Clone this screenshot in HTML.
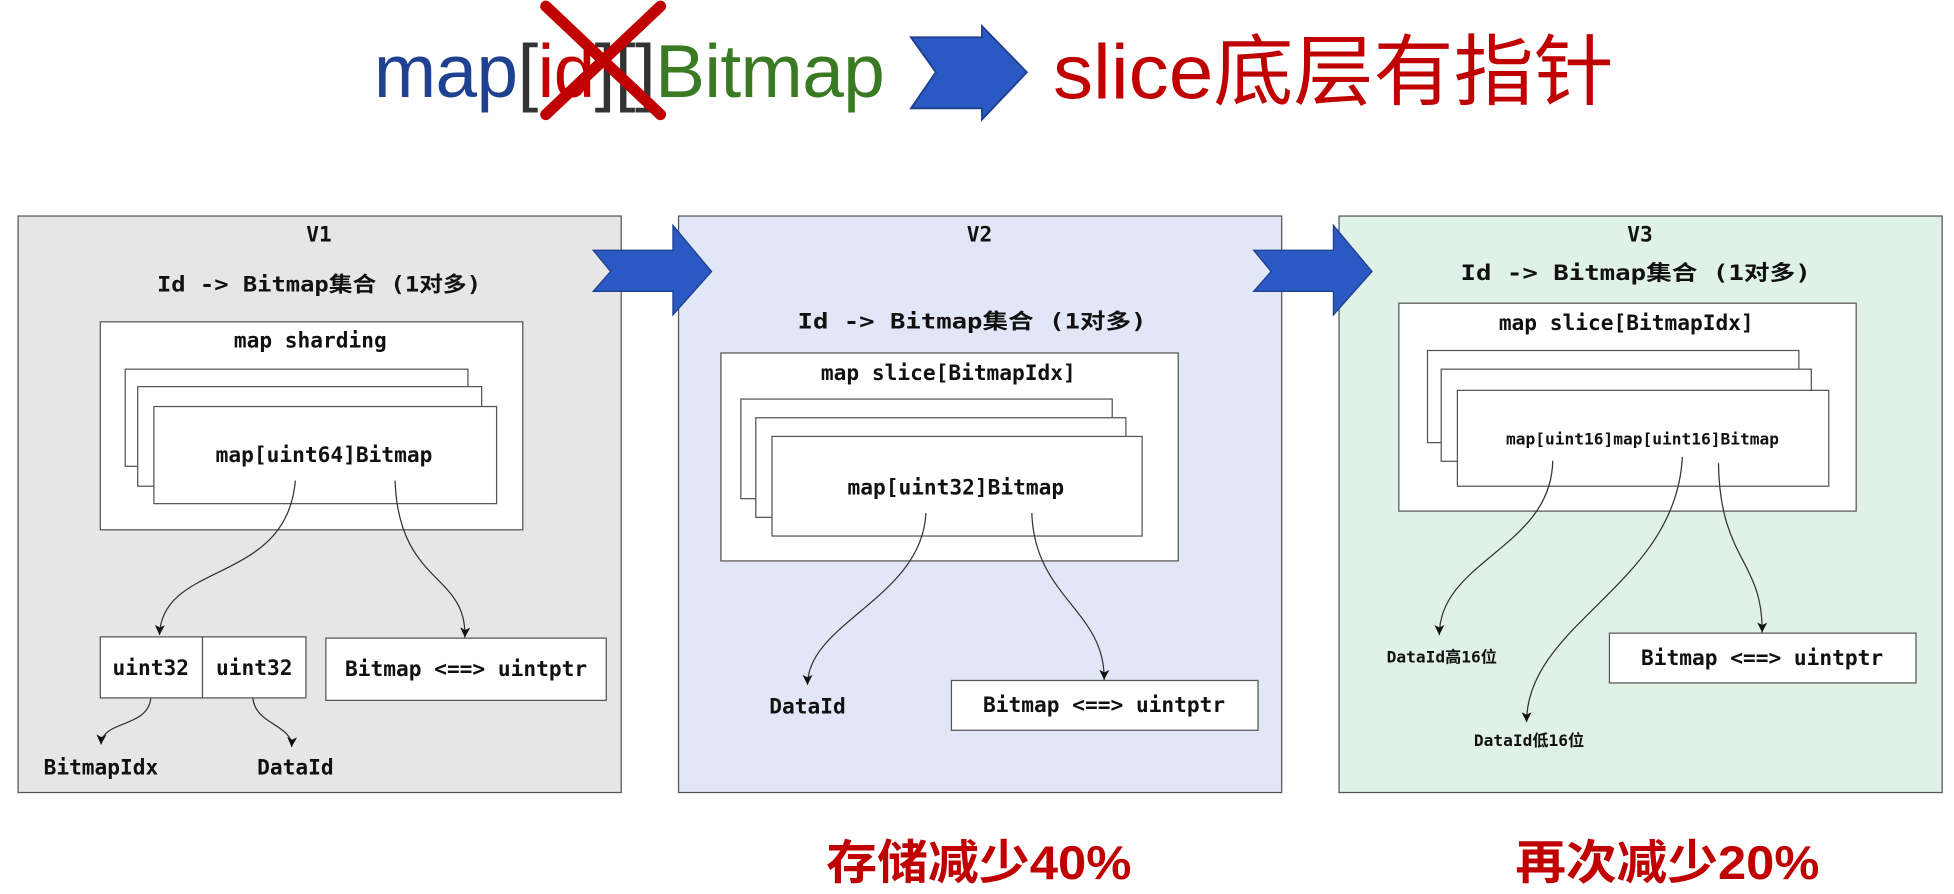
<!DOCTYPE html>
<html><head><meta charset="utf-8"><style>
html,body{margin:0;padding:0;background:#fff;width:1954px;height:894px;overflow:hidden}
svg{display:block}
.m{font-family:"DejaVu Sans Mono","Liberation Mono","Noto Sans CJK SC",monospace;font-weight:bold;fill:#111}
.cn{font-family:"Liberation Sans","Noto Sans CJK SC",sans-serif}
</style></head><body>
<svg width="1954" height="894" viewBox="0 0 1568 718" preserveAspectRatio="none" xmlns="http://www.w3.org/2000/svg">
<defs><marker id="a" markerWidth="10" markerHeight="10" refX="8" refY="5" orient="auto" markerUnits="userSpaceOnUse"><path d="M0,1 L8,5 L0,9 L2,5 Z" fill="#111"/></marker></defs>
<text x="300" y="78" class="cn" font-size="60" textLength="410" lengthAdjust="spacing"><tspan fill="#1f4191">map</tspan><tspan fill="#333">[</tspan><tspan fill="#c00000">id</tspan><tspan fill="#333">][]</tspan><tspan fill="#3a7a22">Bitmap</tspan></text>
<path d="M438,5 L530,92 M530,5 L438,92" stroke="#c00000" stroke-width="9" stroke-linecap="round"/>
<path d="M731,30 L788,30 L788,21 L824,58 L788,96 L788,87 L731,87 L751,58 Z" fill="#2b59c3" stroke="#1f3f8f" stroke-width="1.5"/>
<text x="845" y="79" class="cn" font-size="62" fill="#c00000" textLength="450" lengthAdjust="spacingAndGlyphs">slice底层有指针</text>
<rect x="14.5" y="173.5" width="484" height="463" fill="#e6e6e6" stroke="#555"/>
<rect x="544.5" y="173.5" width="484" height="463" fill="#e1e7f6" stroke="#555"/>
<rect x="1074.5" y="173.5" width="484" height="463" fill="#e0f2e8" stroke="#555"/>
<path d="M476,201 L540,201 L540,181 L571,218 L540,253 L540,234 L476,234 L490,218 Z" fill="#2b59c3" stroke="#1f3f8f"/>
<path d="M1006,201 L1070,201 L1070,181 L1101,218 L1070,253 L1070,234 L1006,234 L1020,218 Z" fill="#2b59c3" stroke="#1f3f8f"/>
<g class="m" font-size="17">
<text x="256" y="194" text-anchor="middle">V1</text>
<text x="126" y="234" textLength="260" lengthAdjust="spacingAndGlyphs">Id -&gt; Bitmap集合  (1对多)</text>
<text x="786" y="194" text-anchor="middle">V2</text>
<text x="640" y="264" textLength="280" lengthAdjust="spacingAndGlyphs">Id -&gt; Bitmap集合  (1对多)</text>
<text x="1316" y="194" text-anchor="middle">V3</text>
<text x="1172" y="225" textLength="281" lengthAdjust="spacingAndGlyphs">Id -&gt; Bitmap集合  (1对多)</text>
</g>
<g fill="#fff" stroke="#555" stroke-width="1">
<rect x="80.5" y="258.5" width="339" height="167"/>
<rect x="100.5" y="296.5" width="275" height="78"/>
<rect x="110.5" y="310.5" width="276" height="80"/>
<rect x="123.5" y="326.5" width="275" height="78"/>
<rect x="80.5" y="511.5" width="82" height="49"/><rect x="162.5" y="511.5" width="83" height="49"/>
<rect x="261.5" y="512.5" width="225" height="50"/>
<rect x="578.5" y="283.5" width="367" height="167"/>
<rect x="594.5" y="320.5" width="298" height="80"/>
<rect x="606.5" y="335.5" width="297" height="80"/>
<rect x="619.5" y="350.5" width="297" height="80"/>
<rect x="763.5" y="546.5" width="246" height="40"/>
<rect x="1122.5" y="243.5" width="367" height="167"/>
<rect x="1145.5" y="281.5" width="298" height="74"/>
<rect x="1156.5" y="296.5" width="297" height="74"/>
<rect x="1169.5" y="313.5" width="298" height="77"/>
<rect x="1291.5" y="508.5" width="246" height="40"/>
</g>
<g class="m" font-size="17" text-anchor="middle">
<text x="249" y="279">map sharding</text>
<text x="260" y="371">map[uint64]Bitmap</text>
<text x="121" y="542">uint32</text><text x="204" y="542">uint32</text>
<text x="374" y="543">Bitmap &lt;==&gt; uintptr</text>
<text x="81" y="622">BitmapIdx</text><text x="237" y="622">DataId</text>
<text x="761" y="305">map slice[BitmapIdx]</text>
<text x="767" y="397">map[uint32]Bitmap</text>
<text x="648" y="573">DataId</text>
<text x="886" y="572">Bitmap &lt;==&gt; uintptr</text>
<text x="1305" y="265">map slice[BitmapIdx]</text>
<text x="1414" y="534">Bitmap &lt;==&gt; uintptr</text>
<text x="1318" y="357" font-size="13">map[uint16]map[uint16]Bitmap</text>
<text x="1157" y="532" font-size="13">DataId高16位</text>
<text x="1227" y="599" font-size="13">DataId低16位</text>
</g>
<g fill="none" stroke="#333" stroke-width="1" marker-end="url(#a)">
<path d="M237,386 C230,470 130,450 128,510"/>
<path d="M317,386 C320,470 375,460 373,512"/>
<path d="M121,561 C118,585 82,578 81,598"/>
<path d="M203,561 C205,582 235,582 234,600"/>
<path d="M743,412 C740,480 648,500 648,550"/>
<path d="M828,412 C830,480 887,490 886,546"/>
<path d="M1246,370 C1245,440 1155,450 1155,510"/>
<path d="M1350,367 C1345,470 1225,500 1225,580"/>
<path d="M1379,372 C1380,450 1415,450 1414,508"/>
</g>
<g class="cn" font-size="38" font-weight="bold" fill="#c00000">
<text x="663" y="706" textLength="245" lengthAdjust="spacingAndGlyphs">存储减少40%</text>
<text x="1216" y="706" textLength="244" lengthAdjust="spacingAndGlyphs">再次减少20%</text>
</g>
</svg>
</body></html>
